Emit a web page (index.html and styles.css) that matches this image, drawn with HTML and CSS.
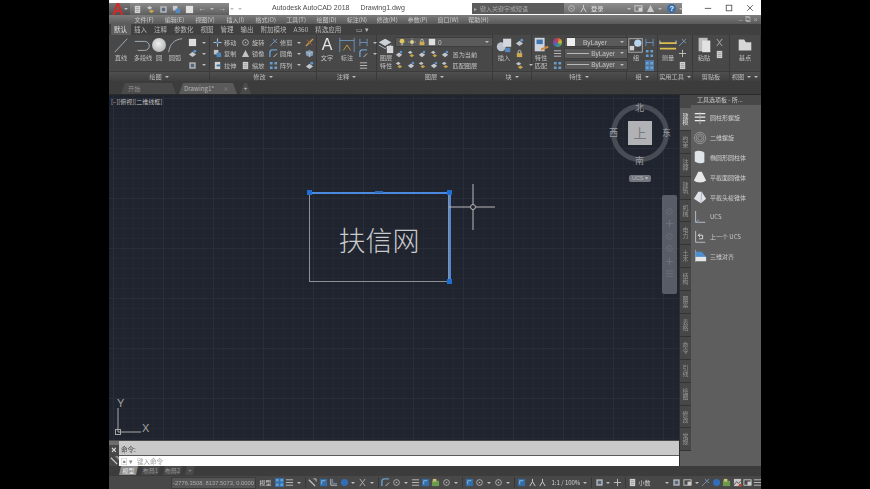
FILE: index.html
```html
<!DOCTYPE html>
<html lang="zh">
<head>
<meta charset="utf-8">
<title>Autodesk AutoCAD 2018</title>
<link rel="stylesheet" href="styles.css">
</head>
<body>
<svg class="defs" aria-hidden="true">
  <symbol id="box" viewBox="0 0 10 10"><rect x="1.5" y="1.5" width="7" height="7" fill="#c8ccd2"/><rect x="3" y="3" width="4" height="4" fill="#5a6a80"/></symbol>
  <symbol id="blue" viewBox="0 0 10 10"><rect x="1" y="1" width="8" height="8" fill="#2f74b8"/><path d="M3 7V3h4" stroke="#9cc6ee" fill="none"/></symbol>
  <symbol id="ring" viewBox="0 0 10 10"><circle cx="5" cy="5" r="3.2" fill="none" stroke="#c4c4c4"/><circle cx="5" cy="5" r=".9" fill="#c4c4c4"/></symbol>
  <symbol id="cross" viewBox="0 0 10 10"><path d="M5 1v8M1 5h8" stroke="#d8d8d8" fill="none"/></symbol>
  <symbol id="lines" viewBox="0 0 10 10"><path d="M1 2h8M1 5h8M1 8h8" stroke="#d4d4d4" fill="none"/></symbol>
  <symbol id="move" viewBox="0 0 10 10"><path d="M5 .5v9M.5 5h9" stroke="#dcdcdc" fill="none"/><rect x="3.5" y="3.5" width="3" height="3" fill="#4f8ed0"/></symbol>
  <symbol id="copy" viewBox="0 0 10 10"><rect x="1" y="1" width="5" height="5" fill="#d6d6d6"/><rect x="4" y="4" width="5" height="5" fill="#4f8ed0"/></symbol>
  <symbol id="tri" viewBox="0 0 10 10"><path d="M5 1l4 8H1z" fill="#d4d4d4"/></symbol>
  <symbol id="stretch" viewBox="0 0 10 10"><rect x="2" y="1" width="6" height="8" fill="#e6e6e6"/><path d="M4 5h5" stroke="#2f74b8" stroke-width="2"/></symbol>
  <symbol id="grid" viewBox="0 0 10 10"><path d="M1 1h3v3H1zM6 1h3v3H6zM1 6h3v3H1zM6 6h3v3H6z" fill="#6fa8e0"/></symbol>
  <symbol id="corner" viewBox="0 0 10 10"><path d="M1 9V4a3 3 0 0 1 3-3h5" fill="none" stroke="#6fa8e0" stroke-width="1.6"/><path d="M5 9l4-4" stroke="#ddd"/></symbol>
  <symbol id="star" viewBox="0 0 10 10"><path d="M1 9L9 1M5 1l1 3 3 1" stroke="#7aa0c8" fill="none"/></symbol>
  <symbol id="pen" viewBox="0 0 10 10"><path d="M1 9L9 1" stroke="#d9a94a" stroke-width="1.5"/><path d="M2 2l6 6" stroke="#c85a3c"/></symbol>
  <symbol id="cube" viewBox="0 0 10 10"><path d="M5 1l4 2v4l-4 2-4-2V3z" fill="#8aa8c8"/><path d="M1 3l4 2 4-2M5 5v4" stroke="#dce6f0" fill="none" stroke-width=".6"/></symbol>
  <symbol id="bulb" viewBox="0 0 10 10"><circle cx="5" cy="4" r="3" fill="#f0d860"/><rect x="4" y="7" width="2" height="2" fill="#ccc"/></symbol>
  <symbol id="sun" viewBox="0 0 10 10"><circle cx="5" cy="5" r="2.4" fill="#e8e2a0"/><path d="M5 0v2M5 8v2M0 5h2M8 5h2" stroke="#d8d8b0" stroke-width=".7"/></symbol>
  <symbol id="lock" viewBox="0 0 10 10"><rect x="2" y="4.5" width="6" height="4.5" fill="#e0b850"/><path d="M3.5 4.5V3a1.5 1.5 0 0 1 3 0v1.5" stroke="#ddd" fill="none"/></symbol>
  <symbol id="white" viewBox="0 0 10 10"><rect x="1" y="1" width="8" height="8" fill="#f2f2f2"/></symbol>
  <symbol id="lay" viewBox="0 0 10 10"><path d="M1 3l3-2 3 2-3 2z" fill="#d0d6de"/><path d="M3 7l3-2 3 2-3 2z" fill="#d8b04a"/></symbol>
  <symbol id="lay2" viewBox="0 0 10 10"><path d="M1 6l4-3 4 3-4 3z" fill="#d2d8e0"/><circle cx="7.5" cy="2.5" r="1.6" fill="#5ea0e0"/></symbol>
  <symbol id="paper" viewBox="0 0 10 10"><rect x="2" y="1" width="6" height="8" fill="#e4e4e4"/><path d="M3 3h4M3 5h4M3 7h4" stroke="#888" stroke-width=".6"/></symbol>
  <symbol id="dim" viewBox="0 0 10 10"><path d="M1 1v8M9 1v8M1 5h8" stroke="#6fa0d0" fill="none"/></symbol>
  <symbol id="ruler" viewBox="0 0 10 10"><path d="M1 2L8 9" stroke="#d8d8d8" stroke-width="1.4"/><path d="M6 1h3v3" stroke="#d8d8d8" fill="none"/></symbol>
  <symbol id="ell" viewBox="0 0 10 10"><path d="M2 1v7h7" stroke="#dcdcdc" fill="none"/><path d="M4 1v5h5" stroke="#7ab0e8" fill="none" stroke-width=".8"/></symbol>
  <symbol id="x2" viewBox="0 0 10 10"><path d="M2 1l6 8M8 1l-6 8" stroke="#c4c4c4" fill="none"/></symbol>
  <symbol id="anno" viewBox="0 0 10 10"><path d="M5 1v3M2 9l3-5 3 5" stroke="#dcdcdc" fill="none" stroke-width="1.1"/></symbol>
  <symbol id="win" viewBox="0 0 10 10"><rect x="1" y="2" width="8" height="6" fill="none" stroke="#ddd"/><rect x="5" y="4" width="4" height="4" fill="#ddd"/></symbol>
  <symbol id="green" viewBox="0 0 10 10"><rect x="1" y="3" width="8" height="6" fill="#6fa84a"/><rect x="2" y="1" width="4" height="3" fill="#e0d080"/></symbol>
  <symbol id="pic" viewBox="0 0 10 10"><rect x="1" y="1" width="8" height="8" fill="#d8d8d8"/><path d="M1 8l3-4 2 2 3-3" stroke="#555" fill="none"/><circle cx="8" cy="8" r="1.6" fill="#d04030"/></symbol>
  <symbol id="disc" viewBox="0 0 10 10"><circle cx="5" cy="5" r="4" fill="#2f74c8"/></symbol>
</svg>

<div class="app">
  <header class="title">
    <div class="logo"><span class="logo-a">A</span><i class="ar"></i></div>
    <div class="qat">
      <svg class="i"><use href="#paper"/></svg><svg class="i"><use href="#lay"/></svg><svg class="i"><use href="#box"/></svg><svg class="i"><use href="#copy"/></svg><svg class="i"><use href="#white"/></svg>
      <span class="qat-u">←</span><i class="ar"></i><span class="qat-u">→</span><i class="ar"></i><i class="ar"></i>
    </div>
    <div class="doc"><span>Autodesk AutoCAD 2018</span><span>Drawing1.dwg</span></div>
    <div class="search"><span>▸</span><span>键入关键字或短语</span></div>
    <div class="sign">
      <svg class="i"><use href="#ring"/></svg><svg class="i"><use href="#anno"/></svg><span class="sign-t">登录</span>
      <span class="sign-g"></span>
      <i class="ar"></i><svg class="i"><use href="#win"/></svg><svg class="i"><use href="#tri"/></svg><i class="ar"></i>
      <span class="help">?</span><i class="ar"></i>
    </div>
    <div class="winbtns">
      <svg viewBox="0 0 10 10"><path d="M1 5.5h8" stroke="#444"/></svg>
      <svg viewBox="0 0 10 10"><rect x="1.5" y="1.5" width="7" height="7" fill="none" stroke="#444"/></svg>
      <svg viewBox="0 0 10 10"><path d="M1.5 1.5l7 7M8.5 1.5l-7 7" stroke="#444"/></svg>
    </div>
  </header>

  <nav class="menu">
    <span>文件(F)</span><span>编辑(E)</span><span>视图(V)</span><span>插入(I)</span><span>格式(O)</span><span>工具(T)</span><span>绘图(D)</span><span>标注(N)</span><span>修改(M)</span><span>参数(P)</span><span>窗口(W)</span><span>帮助(H)</span>
    <div class="menu-ctl">– ⧉ ×</div>
  </nav>

  <nav class="rtabs">
    <span class="on">默认</span><span>插入</span><span>注释</span><span>参数化</span><span>视图</span><span>管理</span><span>输出</span><span>附加模块</span><span>A360</span><span>精选应用</span><span class="rt-icon">▭ ▾</span>
  </nav>

  <section class="ribbon">
    <div class="panel w-draw">
      <div class="pb">
        <div class="lg w24"><svg class="big" viewBox="0 0 20 20"><path d="M3 18L17 3" stroke="#a8b4c0" stroke-width="1.1"/></svg><span>直线</span></div>
        <div class="lg w20"><svg class="big" viewBox="0 0 20 20"><path d="M1 6h11a5 5 0 0 1 0 10H4" stroke="#a8b4c0" fill="none" stroke-width="1.1"/></svg><span>多段线</span></div>
        <div class="lg w12"><span class="sphere"></span><span>圆</span></div>
        <div class="lg w20"><svg class="big" viewBox="0 0 20 20"><path d="M3 18C4 9 9 4 18 3" stroke="#a8b4c0" fill="none" stroke-width="1.1"/></svg><span>圆弧</span></div>
        <div class="col c-draw">
          <div class="r"><svg class="i"><use href="#white"/></svg><i class="ar"></i></div>
          <div class="r"><svg class="i"><use href="#lay2"/></svg><i class="ar"></i></div>
          <div class="r"><svg class="i"><use href="#box"/></svg><i class="ar"></i></div>
        </div>
      </div>
      <div class="pt">绘图<i class="ar"></i></div>
    </div>

    <div class="panel w-mod">
      <div class="pb p-mod">
        <div class="col w28">
          <div class="r"><svg class="i"><use href="#move"/></svg><span>移动</span></div>
          <div class="r"><svg class="i"><use href="#copy"/></svg><span>复制</span></div>
          <div class="r"><svg class="i"><use href="#stretch"/></svg><span>拉伸</span></div>
        </div>
        <div class="col w28">
          <div class="r"><svg class="i"><use href="#ring"/></svg><span>旋转</span></div>
          <div class="r"><svg class="i"><use href="#tri"/></svg><span>镜像</span></div>
          <div class="r"><svg class="i"><use href="#paper"/></svg><span>缩放</span></div>
        </div>
        <div class="col w36">
          <div class="r"><svg class="i"><use href="#star"/></svg><span>修剪</span><i class="ar"></i></div>
          <div class="r"><svg class="i"><use href="#corner"/></svg><span>圆角</span><i class="ar"></i></div>
          <div class="r"><svg class="i"><use href="#grid"/></svg><span>阵列</span><i class="ar"></i></div>
        </div>
        <div class="col">
          <div class="r"><svg class="i"><use href="#pen"/></svg></div>
          <div class="r"><svg class="i"><use href="#cube"/></svg></div>
          <div class="r"><svg class="i"><use href="#lay2"/></svg></div>
        </div>
      </div>
      <div class="pt">修改<i class="ar"></i></div>
    </div>

    <div class="panel w-anno">
      <div class="pb">
        <div class="lg w20"><span class="big-a">A</span><span>文字</span></div>
        <div class="lg w20"><svg class="big" viewBox="0 0 20 20"><path d="M2 2v16M18 2v16M2 5h16" stroke="#6f9cc8" fill="none"/><path d="M6 16l4-6 4 6" stroke="#d8a848" fill="none"/></svg><span>标注</span></div>
        <div class="col c-anno">
          <div class="r"><svg class="i"><use href="#dim"/></svg><i class="ar"></i></div>
          <div class="r"><svg class="i"><use href="#corner"/></svg><i class="ar"></i></div>
          <div class="r"><svg class="i"><use href="#lines"/></svg></div>
        </div>
      </div>
      <div class="pt">注释<i class="ar"></i></div>
    </div>

    <div class="panel w-layer">
      <div class="pb">
        <div class="lg w18"><svg class="big" viewBox="0 0 20 20"><path d="M2 7l7-4 7 4-7 4z" fill="#d8dde4"/><path d="M2 10l7 4 7-4" stroke="#bcc4cc" fill="none"/><rect x="11" y="11" width="7" height="8" fill="#e4e4e4"/></svg><span>图层<br>特性</span></div>
        <div class="col">
          <div class="drop layer-drop"><svg class="i"><use href="#bulb"/></svg><svg class="i"><use href="#sun"/></svg><svg class="i"><use href="#lock"/></svg><svg class="i"><use href="#white"/></svg><span>0</span><i class="ar end"></i></div>
          <div class="r r-layer"><svg class="i"><use href="#lay2"/></svg><svg class="i"><use href="#lay"/></svg><svg class="i"><use href="#lay2"/></svg><svg class="i"><use href="#lay"/></svg><svg class="i"><use href="#lay2"/></svg><span>置为当前</span></div>
          <div class="r r-layer"><svg class="i"><use href="#lay"/></svg><svg class="i"><use href="#lay2"/></svg><svg class="i"><use href="#lay"/></svg><svg class="i"><use href="#lay2"/></svg><svg class="i"><use href="#lay"/></svg><span>匹配图层</span></div>
        </div>
      </div>
      <div class="pt">图层<i class="ar"></i></div>
    </div>

    <div class="panel w-block">
      <div class="pb">
        <div class="lg w22"><svg class="big" viewBox="0 0 20 20"><circle cx="7" cy="12" r="5" fill="#c8d0da"/><rect x="9" y="3" width="9" height="9" fill="#e0e4ea"/><rect x="11" y="13" width="6" height="5" fill="#5a8cc0"/></svg><span>插入</span></div>
        <div class="col">
          <div class="r"><svg class="i"><use href="#lay2"/></svg></div>
          <div class="r"><svg class="i"><use href="#lock"/></svg></div>
          <div class="r"><svg class="i"><use href="#lay"/></svg><i class="ar"></i></div>
        </div>
      </div>
      <div class="pt">块<i class="ar"></i></div>
    </div>

    <div class="panel w-prop">
      <div class="pb">
        <div class="lg w18"><svg class="big" viewBox="0 0 20 20"><rect x="3" y="2" width="11" height="15" fill="#d8dfe8"/><rect x="5" y="4" width="7" height="5" fill="#3f78b8"/><path d="M10 15l8-3" stroke="#e09040" stroke-width="2.2"/></svg><span>特性<br>匹配</span></div>
        <div class="col c-prop">
          <div class="r"><span class="wheel"></span></div>
          <div class="r"><svg class="i"><use href="#lines"/></svg></div>
          <div class="r"><svg class="i"><use href="#grid"/></svg></div>
        </div>
        <div class="col c-drops">
          <div class="drop"><span class="swatch"></span><span>ByLayer</span><i class="ar end"></i></div>
          <div class="drop"><span class="ln"></span><span>ByLayer</span><i class="ar"></i></div>
          <div class="drop"><span class="ln"></span><span>ByLayer</span><i class="ar"></i></div>
        </div>
      </div>
      <div class="pt">特性<i class="ar"></i></div>
    </div>

    <div class="panel w-group">
      <div class="pb">
        <div class="lg w18"><svg class="big" viewBox="0 0 20 20"><rect x="2" y="3" width="15" height="15" fill="none" stroke="#bbb"/><circle cx="12" cy="8" r="4" fill="#bfe0f8"/><rect x="3" y="11" width="5" height="5" fill="#ddd"/></svg><span>组</span></div>
        <div class="col">
          <div class="r"><svg class="i"><use href="#dim"/></svg></div>
          <div class="r"><svg class="i"><use href="#grid"/></svg></div>
          <div class="r r-on"><svg class="i"><use href="#grid"/></svg></div>
        </div>
      </div>
      <div class="pt">组<i class="ar"></i></div>
    </div>

    <div class="panel w-util">
      <div class="pb">
        <div class="lg w20"><svg class="big" viewBox="0 0 20 20"><path d="M1 8h18M1 14h18" stroke="#e8c850" stroke-width="2"/><path d="M1 5v4M19 5v4" stroke="#ddd"/></svg><span>测量</span></div>
        <div class="col">
          <div class="r"><svg class="i"><use href="#star"/></svg></div>
          <div class="r"><svg class="i"><use href="#cross"/></svg></div>
          <div class="r"><svg class="i"><use href="#paper"/></svg></div>
        </div>
      </div>
      <div class="pt">实用工具<i class="ar"></i></div>
    </div>

    <div class="panel w-clip">
      <div class="pb">
        <div class="lg w22"><svg class="big" viewBox="0 0 20 20"><rect x="4" y="2" width="10" height="15" fill="#c8c8c8"/><rect x="8" y="5" width="9" height="13" fill="#f0f0f0"/></svg><span>粘贴</span></div>
        <div class="col">
          <div class="r"><svg class="i"><use href="#x2"/></svg></div>
          <div class="r"><svg class="i"><use href="#paper"/></svg></div>
        </div>
      </div>
      <div class="pt">剪贴板</div>
    </div>

    <div class="panel w-view">
      <div class="pb">
        <div class="lg w30"><svg class="big" viewBox="0 0 20 20"><path d="M3 4h6l2 3h6v9H3z" fill="#e4e4e4"/></svg><span>基点</span></div>
      </div>
      <div class="pt">视图<i class="ar"></i><i class="ar"></i></div>
    </div>
  </section>

  <div class="filetabs">
    <span class="ft ft-start">开始</span>
    <span class="ft ft-doc">Drawing1*<em>×</em></span>
    <span class="ft ft-plus">+</span>
  </div>

  <div class="main">
    <div class="work">
      <div class="canvas">
        <div class="vp">[–][俯视][二维线框]</div>
        <div class="shape"><span class="cad-text">扶信网</span></div>
        <i class="hl h-top"></i><i class="hl h-right"></i>
        <i class="grip g1"></i><i class="grip g2"></i><i class="grip g3"></i><i class="grip-m"></i>
        <svg class="crosshair" viewBox="0 0 46 46"><path d="M0 23H21M27 23H46M24 0V20.500M24 25.500V46" stroke="#b8b8b8" fill="none"/><circle cx="24" cy="23" r="2.500" fill="none" stroke="#b8b8b8"/></svg>
        <div class="vcube">
          <div class="vring"></div>
          <div class="vface">上</div>
          <span class="vd vn">北</span><span class="vd vs">南</span><span class="vd vw">西</span><span class="vd ve">东</span>
        </div>
        <div class="ucs-btn">UCS ▾</div>
        <div class="navbar"><svg class="i"><use href="#ring"/></svg><svg class="i"><use href="#cross"/></svg><svg class="i"><use href="#ring"/></svg><svg class="i"><use href="#ring"/></svg><svg class="i"><use href="#cross"/></svg><svg class="i"><use href="#lines"/></svg></div>
        <svg class="ucs" viewBox="0 0 40 44"><path d="M5 5v24M5 29h23" stroke="#a8a8a8" fill="none"/><rect x="2.500" y="26.500" width="5" height="5" fill="none" stroke="#a8a8a8"/></svg>
        <span class="axis ax-y">Y</span><span class="axis ax-x">X</span>
      </div>
      <div class="cmd">
        <div class="cmd-h"><span class="cmd-grab"></span><span>×</span><svg class="i"><use href="#ruler"/></svg></div>
        <div class="cmd-b">
          <div class="cmd-hist">命令:</div>
          <div class="cmd-in"><span class="cmd-ico">▣ ▾</span>键入命令</div>
        </div>
      </div>
    </div>
    <aside class="pal">
      <div class="pal-tabs">
        <span class="on">建模</span><span>约束</span><span>注释</span><span>建筑</span><span>机械</span><span>电力</span><span>土木</span><span>结构</span><span>图案</span><span>表格</span><span>命令</span><span>引线</span><span>绘图</span><span>修改</span><span>常规</span>
      </div>
      <div class="pal-body">
        <div class="pal-title">工具选项板 - 所...</div>
        <div class="pi"><svg viewBox="0 0 16 16"><path d="M2 3h12M2 7h12M2 11h12" stroke="#eee" stroke-width="1.6"/><path d="M8 1v14" stroke="#aaa"/></svg><span>圆柱形螺旋</span></div>
        <div class="pi"><svg viewBox="0 0 16 16"><circle cx="8" cy="8" r="6.5" fill="none" stroke="#999"/><circle cx="8" cy="8" r="4.5" fill="none" stroke="#999"/><circle cx="8" cy="8" r="2.5" fill="none" stroke="#999"/></svg><span>二维螺旋</span></div>
        <div class="pi"><svg viewBox="0 0 16 16"><path d="M2 2c4-2 8-1 11 1v11c-3 2-8 1-11-1z" fill="#dfe4e8"/></svg><span>椭圆形圆柱体</span></div>
        <div class="pi"><svg viewBox="0 0 16 16"><path d="M6 2h4l5 10c-3 3-11 3-14 0z" fill="#e8e8e8"/></svg><span>平截面圆锥体</span></div>
        <div class="pi"><svg viewBox="0 0 16 16"><path d="M6 2h4l5 8-6 5-8-5z" fill="#dfe2e6"/><path d="M9 15l1-13" stroke="#aab"/></svg><span>平截头棱锥体</span></div>
        <div class="pi"><svg viewBox="0 0 16 16"><path d="M3 1v13h11" stroke="#c4c8d0" fill="none"/><path d="M3 14l4-3" stroke="#7fa8d8"/></svg><span>UCS</span></div>
        <div class="pi"><svg viewBox="0 0 16 16"><path d="M3 1v13h11" stroke="#c4c8d0" fill="none"/><path d="M6 6h5v4H7M6 6l2-2M6 6l2 2" stroke="#e4e4e4" fill="none"/></svg><span>上一个 UCS</span></div>
        <div class="pi"><svg viewBox="0 0 16 16"><path d="M3 1v14" stroke="#aaa"/><path d="M3 3h7l5 6H3z" fill="#4f8ed0"/><rect x="3" y="9" width="12" height="5" fill="#e6e6e6"/></svg><span>三维对齐</span></div>
      </div>
    </aside>
  </div>

  <div class="layouts">
    <span class="lt on">模型</span><span class="lt">布局1</span><span class="lt">布局2</span><span class="lt lt-plus">+</span>
  </div>

  <footer class="status">
    <span class="coords">-2776.3508, 8137.5073, 0.0000</span>
    <span class="st-t st-model">模型</span>
    <svg class="i on"><use href="#grid"/></svg><svg class="i"><use href="#lines"/></svg><i class="ar"></i><b class="sep"></b>
    <svg class="i"><use href="#ruler"/></svg><svg class="i"><use href="#blue"/></svg><svg class="i"><use href="#ell"/></svg><svg class="i"><use href="#disc"/></svg><i class="ar"></i><svg class="i"><use href="#x2"/></svg><i class="ar"></i><b class="sep"></b>
    <svg class="i"><use href="#corner"/></svg><svg class="i"><use href="#ring"/></svg><i class="ar"></i><svg class="i"><use href="#lines"/></svg><svg class="i"><use href="#blue"/></svg><svg class="i"><use href="#green"/></svg><svg class="i"><use href="#ring"/></svg><i class="ar"></i><b class="sep"></b>
    <svg class="i"><use href="#blue"/></svg><svg class="i"><use href="#ring"/></svg><i class="ar"></i><svg class="i"><use href="#ring"/></svg><i class="ar"></i><b class="sep"></b>
    <svg class="i"><use href="#blue"/></svg><svg class="i"><use href="#anno"/></svg><svg class="i"><use href="#anno"/></svg>
    <span class="st-t st-scale">1:1 / 100%</span><i class="ar"></i><b class="sep"></b>
    <svg class="i"><use href="#box"/></svg><i class="ar"></i><svg class="i"><use href="#cross"/></svg><b class="sep"></b>
    <svg class="i"><use href="#paper"/></svg><span class="st-t st-dec">小数</span><i class="ar"></i><svg class="i"><use href="#box"/></svg><svg class="i"><use href="#win"/></svg><i class="ar"></i><svg class="i"><use href="#star"/></svg>
    <svg class="i"><use href="#disc"/></svg><svg class="i"><use href="#green"/></svg><svg class="i"><use href="#pic"/></svg><svg class="i"><use href="#win"/></svg><svg class="i"><use href="#lines"/></svg>
  </footer>
</div>
</body>
</html>
```

FILE: styles.css
```css
* { box-sizing: border-box; }
html, body { margin: 0; height: 100%; }
body {
  background: #000;
  display: flex;
  justify-content: center;
  overflow: hidden;
  font-family: "Noto Sans CJK SC", "Liberation Sans", sans-serif;
  font-size: 6.2px;
  color: #c0c0c0;
}
.defs { position: absolute; width: 0; height: 0; }
.app {
  width: 652px;
  height: 489px;
  display: flex;
  flex-direction: column;
  filter: blur(.45px);
}
.i { width: 9px; height: 9px; flex: none; display: block; opacity: .88; }
.ar {
  display: inline-block;
  flex: none;
  width: 0; height: 0;
  border: 2px solid transparent;
  border-top: 2.5px solid #bdbdbd;
  border-bottom: 0;
  margin: 0 3px;
}
.ar.end { margin-left: auto; }

/* title bar */
.title {
  height: 15px;
  background: #fff;
  display: flex;
  align-items: flex-end;
  color: #4a4a4a;
}
.logo {
  width: 21px;
  height: 12px;
  background: linear-gradient(#777, #4d4d4d);
  display: flex;
  align-items: center;
}
.logo-a { font: bold 16px/12px "Liberation Sans", sans-serif; color: #cf2b2b; margin: 2px 0 0 3px; }
.logo .ar { margin: 0; }
.qat {
  width: 99px;
  height: 12px;
  background: linear-gradient(#8a8a8a, #5e5e5e);
  display: flex;
  align-items: center;
  gap: 4px;
  padding-left: 3px;
}
.qat .ar { margin: 0; }
.qat-u { color: #ccc; font: 8px/10px "Liberation Sans", sans-serif; }
.doc {
  width: 243px;
  align-self: center;
  display: flex;
  gap: 11px;
  padding-left: 43px;
  font: 7px/14px "Liberation Sans", sans-serif;
  white-space: nowrap;
}
.search {
  width: 92px;
  height: 11px;
  margin-bottom: 1px;
  background: #5c5c5c;
  color: #a8a8a8;
  display: flex;
  gap: 3px;
  align-items: center;
  padding-left: 2px;
  font-size: 6px;
  white-space: nowrap;
}
.sign {
  width: 118px;
  height: 11px;
  margin-bottom: 1px;
  background: linear-gradient(#8f8f8f, #6c6c6c);
  color: #e0e0e0;
  display: flex;
  align-items: center;
  gap: 3px;
  padding-left: 3px;
  white-space: nowrap;
}
.sign .ar { margin: 0; }
.sign-t { flex: none; }
.sign-g { width: 18px; flex: none; }
.help {
  width: 9px; height: 9px;
  flex: none;
  border-radius: 50%;
  background: #3c6ea8;
  color: #fff;
  text-align: center;
  font: bold 7px/9px "Liberation Sans", sans-serif;
  margin-left: 2px;
}
.winbtns {
  flex: 1;
  align-self: center;
  display: flex;
  justify-content: flex-end;
  gap: 13px;
  padding-right: 7px;
}
.winbtns svg { width: 8px; height: 8px; display: block; }

/* menu */
.menu {
  height: 9px;
  background: linear-gradient(#7c7c7c, #5a5a5a);
  display: flex;
  padding-left: 20px;
  font-size: 6px;
  line-height: 9px;
  color: #c8c8c8;
}
.menu > span { width: 30.4px; text-align: center; white-space: nowrap; }
.menu-ctl { margin-left: auto; padding-right: 3px; font: 8px/9px "Liberation Sans", sans-serif; color: #aaa; }

/* ribbon tabs */
.rtabs {
  height: 11px;
  background: #404040;
  display: flex;
  padding-left: 1.5px;
  line-height: 11px;
  font-size: 6.5px;
  color: #b8b8b8;
}
.rtabs span { padding: 0 3.5px; white-space: nowrap; }
.rtabs .on { background: #5c5c5c; color: #e0e0e0; }
.rt-icon { margin-left: 8px; }

/* ribbon */
.ribbon { height: 46px; display: flex; background: #484848; }
.panel {
  flex: none;
  display: flex;
  flex-direction: column;
  border-right: 1px solid #3a3a3a;
}
.w-draw { width: 101px; }
.w-mod { width: 107px; }
.w-anno { width: 60px; }
.w-layer { width: 116px; }
.w-block { width: 39px; }
.w-prop { width: 95px; }
.w-group { width: 31px; }
.w-util { width: 35px; }
.w-clip { width: 37px; }
.w-view { width: 31px; }
.pb { height: 36px; display: flex; padding-top: 1px; }
.pt {
  flex: 1;
  background: linear-gradient(#4f4f4f, #3f3f3f);
  border-top: 1px solid #3c3c3c;
  text-align: center;
  line-height: 9px;
  color: #bcbcbc;
  white-space: nowrap;
}
.pt .ar { margin: 0 0 1px 3px; vertical-align: middle; }
.lg {
  flex: none;
  display: flex;
  flex-direction: column;
  align-items: center;
  line-height: 8px;
  text-align: center;
  white-space: nowrap;
}
.big { width: 18px; height: 18px; display: block; flex: none; opacity: .92; }
.w12 { width: 12px; } .w18 { width: 18px; } .w20 { width: 20px; } .w22 { width: 22px; } .w24 { width: 24px; } .w30 { width: 30px; }
.sphere {
  width: 14px; height: 14px;
  margin: 2px 0;
  flex: none;
  border-radius: 50%;
  background: radial-gradient(circle at 45% 40%, #f0f0f0, #a0a0a0);
}
.big-a { font: 16px/17.500px "Liberation Sans", sans-serif; color: #e4e4e4; height: 17.500px; margin-bottom: .5px; flex: none; }
.col { display: flex; flex-direction: column; flex: none; padding-top: 1px; }
.r { height: 11.5px; display: flex; align-items: center; gap: 2px; white-space: nowrap; }
.r-on { background: #4f779f; }
.w28 { width: 28px; } .w36 { width: 36px; }
.p-mod { padding-left: 3px; }
.c-draw { margin-left: 3px; }
.c-anno { margin-left: 2px; }
.c-prop { margin: 0 2px 0 3px; }
.c-drops { width: 64px; }
.wheel { width: 9px; height: 9px; border-radius: 50%; background: conic-gradient(#c84040, #d8b840, #40a060, #4070c0, #9040a0, #c84040); }
.drop {
  height: 10.5px;
  margin-bottom: 1px;
  background: #5a5a5a;
  border: 1px solid #3e3e3e;
  display: flex;
  align-items: center;
  gap: 2px;
  font-size: 6.5px;
  font-family: "Liberation Sans", sans-serif;
  color: #c4c4c4;
  padding: 0 0 0 2px;
}
.c-drops .drop { justify-content: flex-end; }
.c-drops .drop:first-child { justify-content: flex-start; }
.swatch { width: 8px; height: 8px; background: #eee; margin-right: 6px; }
.ln { flex: 1; height: 1px; background: #b8b8b8; }
.layer-drop { width: 98px; }
.layer-drop .i { width: 8px; height: 8px; }
.r-layer { gap: 1px; }
.r-layer .i { width: 8px; height: 8px; margin-right: 2.500px; }

/* file tabs */
.filetabs {
  height: 14px;
  background: #3c3c3c;
  border-bottom: 1px solid #2b2b2b;
  padding: 2px 0 0 12px;
  display: flex;
  gap: 3px;
}
.ft {
  height: 11px;
  background: #4a4a4a;
  clip-path: polygon(4px 0, calc(100% - 4px) 0, 100% 100%, 0 100%);
  line-height: 11px;
  color: #8e8e8e;
  white-space: nowrap;
}
.ft-start { width: 55px; padding-left: 7px; }
.ft-doc { width: 58px; background: #5a5a5a; padding-left: 5px; color: #b4b4b4; display: flex; justify-content: space-between; padding-right: 8px; }
.ft-doc em { font-style: normal; color: #888; }
.ft-plus { width: 11px; text-align: center; color: #ccc; }

/* workspace */
.main { flex: 1; display: flex; min-height: 0; }
.work { width: 570px; display: flex; flex-direction: column; }
.canvas {
  height: 346px;
  position: relative;
  overflow: hidden;
  background-color: #20242e;
  background-image:
    linear-gradient(#2a2e3a 1px, transparent 1px),
    linear-gradient(90deg, #2a2e3a 1px, transparent 1px),
    linear-gradient(#242832 1px, transparent 1px),
    linear-gradient(90deg, #242832 1px, transparent 1px);
  background-size: 50px 50px, 50px 50px, 10px 10px, 10px 10px;
  background-position: 0 3px, 4px 0, 0 3px, 4px 0;
}
.vp { position: absolute; left: 2px; top: 2px; font-size: 6px; color: #c0c0c0; white-space: nowrap; }
.shape {
  position: absolute;
  left: 200px; top: 97px;
  width: 140px; height: 90px;
  border: 1px solid #8e9096;
  display: flex;
  align-items: center;
  justify-content: center;
}
.cad-text { font-size: 27px; font-weight: 300; color: #c8cacc; line-height: 1; margin-top: 4px; }
.hl { position: absolute; background: #4b8ade; }
.h-top { left: 200px; top: 96.500px; width: 140px; height: 2px; }
.h-right { left: 339.500px; top: 97px; width: 2px; height: 90px; }
.grip { position: absolute; width: 5px; height: 5px; background: #1f6ed4; }
.g1 { left: 198px; top: 95px; }
.g2 { left: 338px; top: 95px; }
.g3 { left: 338px; top: 184px; }
.grip-m { position: absolute; left: 266px; top: 96px; width: 8px; height: 2px; background: #2f6db8; }
.crosshair { position: absolute; left: 340px; top: 89px; width: 46px; height: 46px; }
.vcube { position: absolute; left: 500px; top: 8px; width: 62px; height: 62px; }
.vring { position: absolute; left: 2px; top: 1px; width: 58px; height: 58px; border-radius: 50%; border: 5px solid #484c55; }
.vface {
  position: absolute; left: 19px; top: 18px;
  width: 24px; height: 24px;
  background: #b0b2b5;
  color: #787a7e;
  text-align: center;
  font-size: 13px;
  line-height: 24px;
}
.vd { position: absolute; font-size: 9px; line-height: 10px; color: #9a9ca2; }
.vn { left: 26px; top: 0; }
.vs { left: 26px; top: 53px; }
.vw { left: 0; top: 25px; }
.ve { left: 53px; top: 25px; }
.ucs-btn {
  position: absolute;
  left: 520px; top: 80px;
  width: 22px; height: 7px;
  border-radius: 2px;
  background: #73767e;
  color: #b4b6bc;
  font: 5.500px/7px "Liberation Sans", sans-serif;
  text-align: center;
}
.navbar {
  position: absolute;
  left: 553px; top: 100px;
  width: 15px; height: 99px;
  background: #666a74;
  border-radius: 2px;
  display: flex;
  flex-direction: column;
  align-items: center;
  justify-content: space-around;
  padding: 10px 0 14px;
  opacity: .8;
}
.navbar .i { opacity: .25; }
.ucs { position: absolute; left: 4px; top: 308px; width: 40px; height: 44px; }
.axis { position: absolute; font: 11px/10px "Liberation Sans", sans-serif; color: #a4a4a4; }
.ax-y { left: 8px; top: 303px; }
.ax-x { left: 33px; top: 328px; }

/* command line */
.cmd { flex: 1; display: flex; background: #5e5e5e; border-top: 1px solid #4a4a4a; }
.cmd-h {
  width: 10px;
  background: #474747;
  display: flex;
  flex-direction: column;
  align-items: center;
  color: #e6e6e6;
  font: bold 9px/11px "Liberation Sans", sans-serif;
}
.cmd-grab { height: 4px; width: 100%; background: #6e6e6e; flex: none; }
.cmd-b { flex: 1; display: flex; flex-direction: column; }
.cmd-hist { height: 14px; background: #c9c9c9; color: #444; padding: 3px 0 0 2px; line-height: 11px; font-size: 6.500px; }
.cmd-in { flex: 1; background: #fff; color: #a0a0a0; line-height: 10px; font-size: 6.500px; padding-left: 2px; border-top: 1px solid #5a5a5a; }
.cmd-ico { margin-right: 4px; color: #888; }

/* palette */
.pal { flex: 1; display: flex; background: #5e5e5e; border-left: 1px solid #2e2e2e; }
.pal-tabs {
  width: 11px;
  background: #474747;
  display: flex;
  flex-direction: column;
  align-self: flex-start;
  padding-top: 13px;
  flex: none;
}
.pal-tabs span {
  height: 22.900px;
  flex: none;
  writing-mode: vertical-rl;
  text-align: center;
  font-size: 6px;
  line-height: 11px;
  color: #989898;
  border-bottom: 1px solid #343434;
}
.pal-tabs .on { background: #5e5e5e; color: #e4e4e4; }
.pal-body { flex: 1; display: flex; flex-direction: column; }
.pal-title {
  height: 10px;
  background: #474747;
  color: #c8c8c8;
  font-size: 6px;
  line-height: 10px;
  padding-left: 6px;
  margin-bottom: 3px;
  white-space: nowrap;
}
.pi { height: 19.800px; display: flex; align-items: center; gap: 3px; padding-left: 2px; font-size: 6px; color: #cccccc; white-space: nowrap; }
.pi svg { width: 14px; height: 14px; flex: none; }

/* layout tabs */
.layouts {
  height: 10px;
  background: #3c3c3c;
  display: flex;
  padding-left: 10px;
  gap: 3px;
  font-size: 6px;
  line-height: 9px;
  color: #989898;
}
.lt { height: 9px; width: 19px; text-align: center; background: #4a4a4a; clip-path: polygon(2px 0, 100% 0, calc(100% - 2px) 100%, 0 100%); }
.lt.on { background: #8a8a8a; color: #eee; }
.lt-plus { width: 10px; }

/* status bar */
.status {
  height: 13px;
  background: #484848;
  display: flex;
  align-items: center;
  padding-left: 62px;
  gap: 1.400px;
  white-space: nowrap;
}
.status .ar { margin: 0 1.500px; }
.coords {
  width: 85px;
  height: 12px;
  background: #565656;
  border: 1px solid #3c3c3c;
  font: 5.800px/10px "Liberation Sans", sans-serif;
  color: #adadad;
  text-align: center;
  flex: none;
}
.st-t { color: #d0d0d0; font-size: 6px; flex: none; }
.st-model { margin: 0 2px; }
.st-scale { margin-left: 3px; }
.st-dec { width: 24px; }
.sep { width: 1px; height: 11px; background: #383838; flex: none; margin: 0 1px; }
.status .on { background: #2f74b8; }
```
